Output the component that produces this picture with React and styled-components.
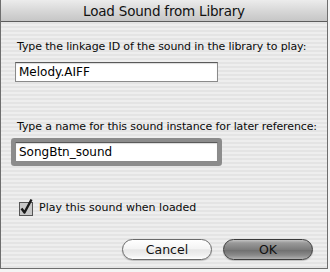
import React, { useState } from "react";
import styled, { createGlobalStyle } from "styled-components";

const GlobalStyle = createGlobalStyle`
  html, body {
    margin: 0;
    padding: 0;
    background: #f4f4f4;
  }
  body {
    font-family: "DejaVu Sans", "Liberation Sans", sans-serif;
  }
`;

const Dialog = styled.div`
  width: 326px;
  height: 268px;
  display: flex;
  flex-direction: column;
  border: 1px solid #6e6e6e;
  border-top: none;
  background: repeating-linear-gradient(
    to bottom,
    #eeeeee 0px,
    #eeeeee 2px,
    #e4e4e4 2px,
    #e4e4e4 4px
  );
  overflow: hidden;
`;

const TitleBar = styled.div`
  height: 21px;
  flex: none;
  display: flex;
  align-items: center;
  justify-content: center;
  background: linear-gradient(to bottom, #ececec, #d6d6d6 55%, #c6c6c6);
  border-bottom: 1px solid #5c5c5c;
  font-size: 13.5px;
  color: #111;
  letter-spacing: -0.2px;
`;

const Body = styled.div`
  flex: 1;
  display: flex;
  flex-direction: column;
  padding: 17px 13px 0 13px;
`;

const Label = styled.div`
  font-size: 11px;
  line-height: 16px;
  color: #0a0a0a;
  padding-left: 3px;
  letter-spacing: -0.12px;
  white-space: nowrap;
  margin-top: ${(p) => p.$top || 0}px;
`;

const Field = styled.input`
  box-sizing: border-box;
  width: 203px;
  height: 20px;
  margin: 7px 0 0 1px;
  padding: 0 3px;
  border: 1px solid #8a8a8a;
  border-top-color: #5a5a5a;
  box-shadow: inset 0 1px 1px rgba(0, 0, 0, 0.15)
    ${(p) => (p.$focused ? ", 0 0 0 4px #8c8c8c" : "")};
  border-radius: ${(p) => (p.$focused ? "1px" : "0")};
  background: #fff;
  font-family: "DejaVu Sans", "Liberation Sans", sans-serif;
  font-size: 12px;
  color: #000;
  outline: none;
`;

const CheckRow = styled.label`
  display: flex;
  align-items: center;
  gap: 5px;
  margin: 36px 0 0 4px;
  font-size: 11px;
  color: #0a0a0a;
`;

const ButtonRow = styled.div`
  display: flex;
  justify-content: flex-end;
  gap: 11px;
  margin-top: 23px;
  padding-right: 1px;
`;

const Button = styled.button`
  width: 90px;
  height: 21px;
  border-radius: 11px;
  font-family: "DejaVu Sans", "Liberation Sans", sans-serif;
  font-size: 12.5px;
  color: #111;
  padding: 0;
  border: 1px solid ${(p) => (p.$primary ? "#3c3c3c" : "#6a6a6a")};
  background: ${(p) =>
    p.$primary
      ? "linear-gradient(to bottom, #c4c4c4 0%, #9a9a9a 15%, #7c7c7c 50%, #6e6e6e 52%, #8a8a8a 80%, #b0b0b0 100%)"
      : "linear-gradient(to bottom, #ffffff 0%, #f4f4f4 45%, #e6e6e6 52%, #f0f0f0 80%, #ffffff 100%)"};
  box-shadow: 0 1px 1px rgba(0, 0, 0, 0.2);
`;

const CheckIcon = () => (
  <svg width="16" height="18" viewBox="0 0 16 18">
    <rect
      x="1.5"
      y="4.5"
      width="13"
      height="13"
      fill="#c8c8c8"
      stroke="#555"
    />
    <path
      d="M3.5 10.5 L6.5 14.5 L13.5 1.5"
      fill="none"
      stroke="#1a1a1a"
      strokeWidth="2.4"
      strokeLinejoin="round"
    />
  </svg>
);

export default function App() {
  const [linkage, setLinkage] = useState("Melody.AIFF");
  const [name, setName] = useState("SongBtn_sound");

  return (
    <>
      <GlobalStyle />
      <Dialog>
        <TitleBar>Load Sound from Library</TitleBar>
        <Body>
          <Label>Type the linkage ID of the sound in the library to play:</Label>
          <Field value={linkage} onChange={(e) => setLinkage(e.target.value)} />
          <Label $top={37}>Type a name for this sound instance for later reference:</Label>
          <Field $focused value={name} onChange={(e) => setName(e.target.value)} />
          <CheckRow>
            <CheckIcon />
            Play this sound when loaded
          </CheckRow>
          <ButtonRow>
            <Button>Cancel</Button>
            <Button $primary>OK</Button>
          </ButtonRow>
        </Body>
      </Dialog>
    </>
  );
}
